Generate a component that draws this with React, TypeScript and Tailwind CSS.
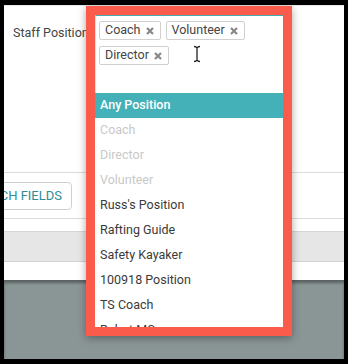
import React from "react";

const X = () => (
  <svg width="8" height="8" viewBox="0 0 8 8" className="shrink-0">
    <path d="M1 1L7 7M7 1L1 7" stroke="#888" strokeWidth="2.2" strokeLinecap="butt" />
  </svg>
);

const Tag = ({ label }: { label: string }) => (
  <div className="h-[19px] flex items-center gap-[5px] pl-[5px] pr-[6px] border border-[#d0d0d0] rounded-[2px] text-[12.5px] text-[#444] leading-none bg-white">
    <span>{label}</span>
    <X />
  </div>
);

const items: { t: string; kind: "active" | "disabled" | "normal" }[] = [
  { t: "Any Position", kind: "active" },
  { t: "Coach", kind: "disabled" },
  { t: "Director", kind: "disabled" },
  { t: "Volunteer", kind: "disabled" },
  { t: "Russ's Position", kind: "normal" },
  { t: "Rafting Guide", kind: "normal" },
  { t: "Safety Kayaker", kind: "normal" },
  { t: "100918 Position", kind: "normal" },
  { t: "TS Coach", kind: "normal" },
  { t: "Robot MC", kind: "normal" },
];

export default function App() {
  return (
    <div className="w-[348px] h-[364px] bg-black pt-[5px] pb-[5px] px-[4px] relative overflow-hidden font-['Roboto',sans-serif]">
      <div className="w-full h-full bg-white flex flex-col overflow-hidden">
        <div className="h-[168px] border-t border-[#e8e8e8] border-b border-b-[#dcdcdc] shrink-0 pl-[9px] pt-[18px]">
          <div className="text-[12.5px] text-[#444]">Staff Position</div>
        </div>
        <div className="h-[46px] shrink-0 border-b border-[#dcdcdc] flex items-center">
          <div className="ml-[-66px] h-[28px] w-[134px] shrink-0 border border-[#cfcfcf] rounded-[4px] flex items-center justify-end pr-[9px] text-[13px] text-[#2e8d96] whitespace-nowrap">
            SEARCH FIELDS
          </div>
        </div>
        <div className="h-[12px] shrink-0" />
        <div className="h-[31px] shrink-0 bg-[#e6e6e6] border-t border-[#d6d6d6] border-b border-b-[#d2d2d2]" />
        <div className="h-[18px] shrink-0" />
        <div className="flex-1 bg-[#8a9595] shadow-[inset_0_3px_3px_rgba(0,0,0,0.35)]" />
      </div>

      <div className="absolute left-[86px] top-[6px] w-[206px] h-[330px] border-[9px] border-[#fb5b4b] bg-white shadow-[0_2px_8px_rgba(0,0,0,0.35)] flex flex-col overflow-hidden">
        <div className="h-[78px] shrink-0 border-t border-[#4aa9b0] border-l border-l-[#e0e0e0] pl-[3px] pt-[5px] relative">
          <div className="flex flex-wrap gap-x-[5px] gap-y-[6px] w-[170px]">
            <Tag label="Coach" />
            <Tag label="Volunteer" />
            <Tag label="Director" />
          </div>
          <svg className="absolute left-[97px] top-[29px]" width="8" height="18" viewBox="0 0 8 18">
            <path d="M1 1.5C2.5 1.5 3.5 2 4 3M7 1.5C5.5 1.5 4.5 2 4 3M4 3V15M1 16.5C2.5 16.5 3.5 16 4 15M7 16.5C5.5 16.5 4.5 16 4 15" stroke="#222" strokeWidth="1.3" fill="none" />
          </svg>
        </div>
        <div className="flex flex-col">
          {items.map((it) => (
            <div
              key={it.t}
              className={
                "h-[25px] shrink-0 flex items-center pl-[5px] text-[12.5px] " +
                (it.kind === "active"
                  ? "bg-[#44b0b7] text-white font-medium"
                  : it.kind === "disabled"
                  ? "text-[#c9c9c9]"
                  : "text-[#3a3a3a]")
              }
            >
              {it.t}
            </div>
          ))}
        </div>
      </div>
    </div>
  );
}
